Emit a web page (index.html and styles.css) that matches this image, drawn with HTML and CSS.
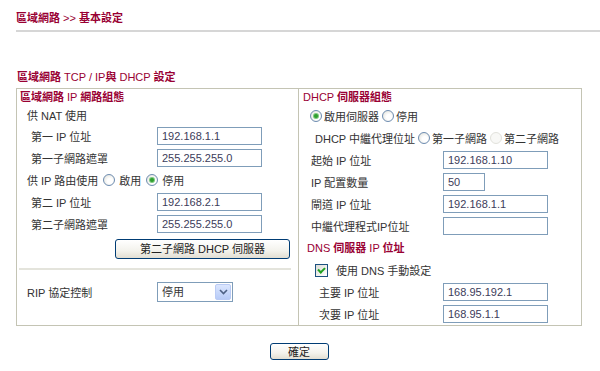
FILE: index.html
```html
<!DOCTYPE html>
<html lang="zh-Hant">
<head>
    <meta charset="UTF-8">
    <meta name="viewport" content="width=device-width, initial-scale=1.0">
    <title>區域網路 >> 基本設定</title>
    <link rel="stylesheet" href="styles.css">
</head>
<body>
    <div class="page">
        <h1 class="title"><b>區域網路</b> &gt;&gt; <b>基本設定</b></h1>
        <div class="rule"></div>

        <h2 class="caption"><b>區域網路</b> TCP / IP<b>與</b> DHCP <b>設定</b></h2>

        <form class="panel">
            <div class="col col-left">
                <div class="col-head"><b>區域網路</b> IP <b>網路組態</b></div>
                <div class="row row-short pad-10">供 NAT 使用</div>
                <div class="row pad-14">
                    <label class="field-label">第一 IP 位址</label>
                    <input class="text" type="text" value="192.168.1.1">
                </div>
                <div class="row pad-14">
                    <label class="field-label">第一子網路遮罩</label>
                    <input class="text" type="text" value="255.255.255.0">
                </div>
                <div class="row pad-10">
                    <span>供 IP 路由使用</span>
                    <input class="radio" type="radio" name="route" id="route-on">
                    <label for="route-on">啟用</label>
                    <input class="radio" type="radio" name="route" id="route-off" checked>
                    <label for="route-off">停用</label>
                </div>
                <div class="row pad-14">
                    <label class="field-label">第二 IP 位址</label>
                    <input class="text" type="text" value="192.168.2.1">
                </div>
                <div class="row pad-14">
                    <label class="field-label">第二子網路遮罩</label>
                    <input class="text" type="text" value="255.255.255.0">
                </div>
                <div class="row-button">
                    <button class="btn btn-wide" type="button">第二子網路 DHCP 伺服器</button>
                </div>
                <div class="sep"></div>
                <div class="row pad-10">
                    <label class="field-label">RIP 協定控制</label>
                    <span class="combo">
                        <select class="combo-select">
                            <option>停用</option>
                            <option>啟用</option>
                        </select>
                        <span class="combo-btn">
                            <svg width="9" height="6" viewBox="0 0 9 6"><path d="M1 1 L4.5 4.5 L8 1" fill="none" stroke="#4d6185" stroke-width="1.6"/></svg>
                        </span>
                    </span>
                </div>
            </div>

            <div class="col col-right">
                <div class="col-head">DHCP <b>伺服器組態</b></div>
                <div class="row pad-8">
                    <input class="radio tight" type="radio" name="dhcp" id="dhcp-on" checked>
                    <label for="dhcp-on">啟用伺服器</label>
                    <input class="radio tight" type="radio" name="dhcp" id="dhcp-off">
                    <label for="dhcp-off">停用</label>
                </div>
                <div class="row pad-16">
                    <span>DHCP 中繼代理位址</span>
                    <input class="radio tight" type="radio" name="relay" id="relay-1">
                    <label for="relay-1">第一子網路</label>
                    <input class="radio tight" type="radio" name="relay" id="relay-2" disabled>
                    <label for="relay-2">第二子網路</label>
                </div>
                <div class="row pad-12">
                    <label class="field-label wide">起始 IP 位址</label>
                    <input class="text" type="text" value="192.168.1.10">
                </div>
                <div class="row pad-12">
                    <label class="field-label wide">IP 配置數量</label>
                    <input class="text text-short" type="text" value="50">
                </div>
                <div class="row pad-12">
                    <label class="field-label wide">閘道 IP 位址</label>
                    <input class="text" type="text" value="192.168.1.1">
                </div>
                <div class="row pad-12">
                    <label class="field-label wide">中繼代理程式IP位址</label>
                    <input class="text" type="text" value="">
                </div>
                <div class="sub-head">DNS <b>伺服器</b> IP <b>位址</b></div>
                <div class="row pad-16">
                    <input class="check" type="checkbox" id="dns-manual" checked>
                    <label for="dns-manual">使用 DNS 手動設定</label>
                </div>
                <div class="row pad-20">
                    <label class="field-label wide">主要 IP 位址</label>
                    <input class="text" type="text" value="168.95.192.1">
                </div>
                <div class="row pad-20">
                    <label class="field-label wide">次要 IP 位址</label>
                    <input class="text" type="text" value="168.95.1.1">
                </div>
            </div>
        </form>

        <div class="actions">
            <button class="btn btn-ok" type="button">確定</button>
        </div>
    </div>
</body>
</html>
```

FILE: styles.css
```css
body {
    margin: 0;
    padding: 0;
    background: #ffffff;
    font-family: "Liberation Sans", "Noto Sans CJK TC", sans-serif;
    font-size: 11px;
    color: #333333;
}
.page {
    padding: 11px 0 0 16px;
}
.title {
    margin: 0;
    font-size: 11px;
    line-height: 14px;
    font-weight: normal;
    color: #990033;
}
.title b,
.caption b,
.col-head b,
.sub-head b {
    font-weight: bold;
}
.rule {
    height: 2px;
    margin-top: 5px;
    background: #d6d6d6;
}
.caption {
    margin: 38px 0 0 1px;
    font-size: 11px;
    line-height: 14px;
    font-weight: normal;
    color: #990033;
}
.panel {
    display: grid;
    grid-template-columns: 282px 281px;
    width: 564px;
    margin: 4px 0 0 0;
    border: 1px solid #c4c4b4;
}
.col-left {
    border-right: 1px solid #c4c4b4;
}
.col-head {
    height: 16px;
    line-height: 16px;
    padding-left: 3px;
    color: #990033;
}
.col-right .col-head {
    padding-left: 4px;
}
.row {
    display: flex;
    align-items: center;
    height: 22px;
    white-space: nowrap;
}
.row-short {
    height: 20px;
}
.pad-8 { padding-left: 8px; }
.pad-10 { padding-left: 10px; }
.pad-12 { padding-left: 12px; }
.pad-14 { padding-left: 14px; }
.pad-16 { padding-left: 16px; }
.pad-20 { padding-left: 20px; }

.field-label {
    width: 126px;
    flex: none;
}
.pad-10 .field-label {
    width: 130px;
}
.col-right .field-label.wide {
    width: 132px;
}
.col-right .pad-20 .field-label.wide {
    width: 124px;
}
.sub-head {
    height: 22px;
    line-height: 22px;
    padding-left: 8px;
    color: #990033;
}
.text {
    box-sizing: border-box;
    width: 105px;
    height: 18px;
    margin: 0;
    padding: 0 4px;
    border: 1px solid #7f9db9;
    font-family: "Liberation Sans", "Noto Sans CJK TC", sans-serif;
    font-size: 11px;
    color: #3c3c5a;
    background: #ffffff;
}
.text-short {
    width: 42px;
}
.radio {
    -webkit-appearance: none;
    appearance: none;
    box-sizing: border-box;
    width: 12px;
    height: 12px;
    margin: 0 4px 0 5px;
    border: 1px solid #6d8cb0;
    border-radius: 50%;
    background: radial-gradient(circle at 60% 60%, #ffffff 30%, #dcdcd4 100%);
    display: inline-grid;
    place-content: center;
}
.radio.tight {
    margin: 0 2px 0 3px;
}
.radio:checked::before {
    content: "";
    width: 4px;
    height: 4px;
    border-radius: 50%;
    background: #2f9e2f;
    box-shadow: 0 0 0 1px #7cc97c;
}
.radio:disabled {
    border-color: #e2e2dc;
    background: #f8f8f6;
}
.check {
    -webkit-appearance: none;
    appearance: none;
    box-sizing: border-box;
    width: 13px;
    height: 13px;
    margin: 0 8px 0 0;
    border: 1px solid #1c5180;
    background: linear-gradient(135deg, #dcdcd6, #ffffff);
    display: inline-grid;
    place-content: center;
}
.check:checked::before {
    content: "";
    width: 5px;
    height: 3px;
    margin-top: -2px;
    border-left: 2px solid #21a121;
    border-bottom: 2px solid #21a121;
    transform: rotate(-45deg);
}
.row-button {
    height: 28px;
    display: flex;
    align-items: center;
    padding-left: 98px;
}
.btn {
    box-sizing: border-box;
    margin: 0;
    padding: 0;
    border: 1px solid #003c74;
    border-radius: 3px;
    background: linear-gradient(#ffffff, #f3f2ec 60%, #e2ded2);
    font-family: "Liberation Sans", "Noto Sans CJK TC", sans-serif;
    font-size: 11px;
    color: #222222;
    line-height: 14px;
}
.btn-wide {
    width: 175px;
    height: 20px;
}
.sep {
    height: 2px;
    margin: 5px 7px 11px 2px;
    background: #e4e4dc;
}
.combo {
    display: inline-flex;
    align-items: center;
    box-sizing: border-box;
    width: 76px;
    height: 20px;
    border: 1px solid #7f9db9;
    background: #ffffff;
}
.combo-select {
    -webkit-appearance: none;
    appearance: none;
    flex: 1;
    min-width: 0;
    height: 18px;
    margin: 0;
    padding: 0 0 0 4px;
    border: none;
    background: transparent;
    font-family: "Liberation Sans", "Noto Sans CJK TC", sans-serif;
    font-size: 11px;
    color: #333333;
    outline: none;
}
.combo-btn {
    box-sizing: border-box;
    display: flex;
    align-items: center;
    justify-content: center;
    width: 16px;
    height: 16px;
    margin-right: 1px;
    border: 1px solid #bacbf5;
    border-radius: 2px;
    background: linear-gradient(#dbe6fe, #b7cbf7);
}
.actions {
    width: 566px;
    margin-top: 17px;
    text-align: center;
}
.btn-ok {
    width: 59px;
    height: 17px;
}
```
